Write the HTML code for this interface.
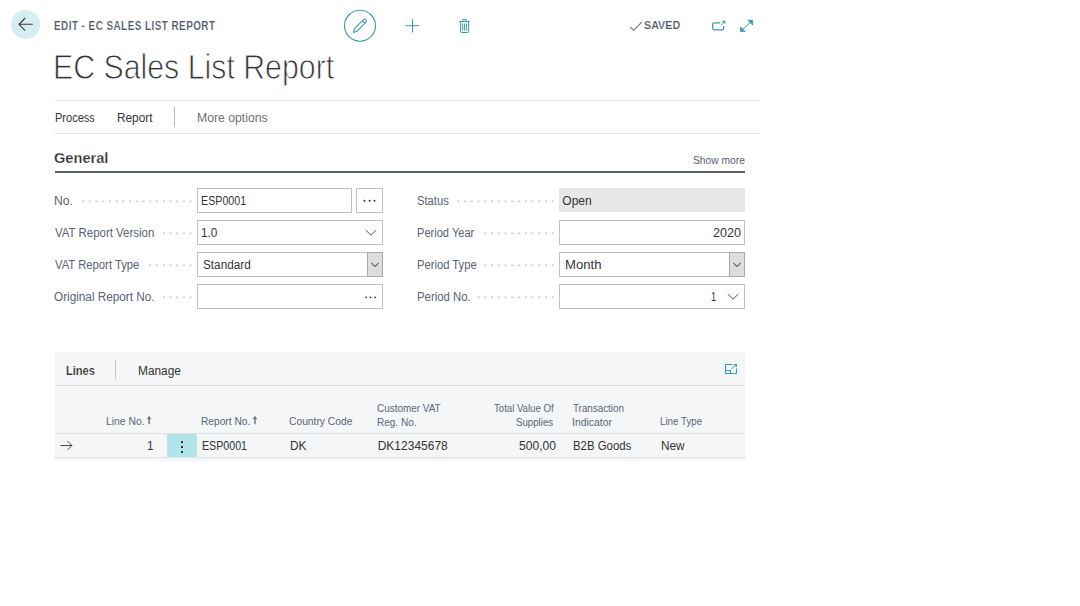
<!DOCTYPE html>
<html><head><meta charset="utf-8">
<style>
*{margin:0;padding:0;box-sizing:border-box}
html,body{width:1080px;height:606px;background:#fff;overflow:hidden;position:relative;font-family:"Liberation Sans",sans-serif;color:#212121}
.a{position:absolute;white-space:nowrap}
.t{position:absolute;white-space:nowrap;line-height:1}
.lbl{color:#566274;font-size:12px;letter-spacing:-0.3px}
.dots{position:absolute;height:3px;background-image:radial-gradient(circle,#c4c7cc 0.75px,transparent 1px);background-size:6.9px 3px;background-repeat:repeat-x;background-position:right center}
.fld{position:absolute;border:1px solid #c2c2c2;background:#fff;height:25px}
.val{font-size:12px;color:#212121}
.hd{color:#505c6d;font-size:11px}
</style></head><body>

<!-- back button -->
<div class="a" style="left:11px;top:10px;width:29px;height:29px;border-radius:50%;background:#d6eef2"></div>
<svg class="a" style="left:0;top:0" width="60" height="50">
<path d="M19.2 24.3H32.8M25.2 18L19 24.3L25.2 30.6" fill="none" stroke="#3a3a3a" stroke-width="1.1"/>
</svg>


<!-- pencil -->
<svg class="a" style="left:330px;top:0" width="160" height="50">
<circle cx="30" cy="25.7" r="15.5" fill="none" stroke="#3a9ca6" stroke-width="1.15"/>
<path d="M23.5 32.5L24.3 28.8L33.5 19.6Q34.8 18.6 35.9 19.7Q37 20.8 36 22.1L26.8 31.3Z M32.3 20.8L34.8 23.3" fill="none" stroke="#3a9ca6" stroke-width="1.1"/>
<path d="M82.5 19.2V32.6M75.4 25.7H89" fill="none" stroke="#3a9ca6" stroke-width="1"/>
<path d="M129 21.5H140M130.6 21.5V31.5Q130.6 32.5 131.6 32.5H137.6Q138.6 32.5 138.6 31.5V21.5M132.5 21.5L133 19.5H136.2L136.7 21.5M132.7 23.5V30.5M134.6 23.5V30.5M136.4 23.5V30.5" fill="none" stroke="#3a9ca6" stroke-width="1"/>
</svg>

<!-- saved -->
<svg class="a" style="left:620px;top:0" width="150" height="50">
<path d="M10.3 26.8L13.8 30.3L21.9 21.9" fill="none" stroke="#667080" stroke-width="1.05"/>
<path d="M100.3 22.9H94Q92.7 22.9 92.7 24.2V28.6Q92.7 29.9 94 29.9H102.3Q103.6 29.9 103.6 28.6V26" fill="none" stroke="#3a9ca6" stroke-width="1.3"/>
<path d="M101 25.2L103.8 22.4" fill="none" stroke="#3a9ca6" stroke-width="1"/>
<path d="M102.5 21H105V23.5Z" fill="#3a9ca6" stroke="#3a9ca6" stroke-width="0.8"/>
<path d="M121 31L132 20.8" fill="none" stroke="#3a9ca6" stroke-width="1"/>
<path d="M128 20.3H132.6V24.9Z" fill="#3a9ca6" stroke="#3a9ca6" stroke-width="0.9" stroke-linejoin="round"/>
<path d="M120.5 27V31.6H125.1Z" fill="#3a9ca6" stroke="#3a9ca6" stroke-width="0.9" stroke-linejoin="round"/>
</svg>

<!-- title -->

<div class="a" style="left:55px;top:100px;width:705px;height:1px;background:#e3e3e3"></div>
<div class="a" style="left:55px;top:133px;width:705px;height:1px;background:#e3e3e3"></div>
<div class="a" style="left:174px;top:107px;width:1px;height:20px;background:#b4bac3"></div>

<!-- General -->
<div class="a" style="left:55px;top:171px;width:690px;height:2px;background:#586273"></div>

<!-- left col -->
<svg class="a" style="left:0;top:0" width="600" height="320">
<rect x="189.77" y="200.50" width="1.8" height="1.8" fill="#c9ccd1"/>
<rect x="183.04" y="200.50" width="1.8" height="1.8" fill="#c9ccd1"/>
<rect x="176.31" y="200.50" width="1.8" height="1.8" fill="#c9ccd1"/>
<rect x="169.58" y="200.50" width="1.8" height="1.8" fill="#c9ccd1"/>
<rect x="162.85" y="200.50" width="1.8" height="1.8" fill="#c9ccd1"/>
<rect x="156.12" y="200.50" width="1.8" height="1.8" fill="#c9ccd1"/>
<rect x="149.39" y="200.50" width="1.8" height="1.8" fill="#c9ccd1"/>
<rect x="142.66" y="200.50" width="1.8" height="1.8" fill="#c9ccd1"/>
<rect x="135.93" y="200.50" width="1.8" height="1.8" fill="#c9ccd1"/>
<rect x="129.20" y="200.50" width="1.8" height="1.8" fill="#c9ccd1"/>
<rect x="122.47" y="200.50" width="1.8" height="1.8" fill="#c9ccd1"/>
<rect x="115.74" y="200.50" width="1.8" height="1.8" fill="#c9ccd1"/>
<rect x="109.01" y="200.50" width="1.8" height="1.8" fill="#c9ccd1"/>
<rect x="102.28" y="200.50" width="1.8" height="1.8" fill="#c9ccd1"/>
<rect x="95.55" y="200.50" width="1.8" height="1.8" fill="#c9ccd1"/>
<rect x="88.82" y="200.50" width="1.8" height="1.8" fill="#c9ccd1"/>
<rect x="82.09" y="200.50" width="1.8" height="1.8" fill="#c9ccd1"/>
<rect x="189.77" y="232.50" width="1.8" height="1.8" fill="#c9ccd1"/>
<rect x="183.04" y="232.50" width="1.8" height="1.8" fill="#c9ccd1"/>
<rect x="176.31" y="232.50" width="1.8" height="1.8" fill="#c9ccd1"/>
<rect x="169.58" y="232.50" width="1.8" height="1.8" fill="#c9ccd1"/>
<rect x="162.85" y="232.50" width="1.8" height="1.8" fill="#c9ccd1"/>
<rect x="189.77" y="264.50" width="1.8" height="1.8" fill="#c9ccd1"/>
<rect x="183.04" y="264.50" width="1.8" height="1.8" fill="#c9ccd1"/>
<rect x="176.31" y="264.50" width="1.8" height="1.8" fill="#c9ccd1"/>
<rect x="169.58" y="264.50" width="1.8" height="1.8" fill="#c9ccd1"/>
<rect x="162.85" y="264.50" width="1.8" height="1.8" fill="#c9ccd1"/>
<rect x="156.12" y="264.50" width="1.8" height="1.8" fill="#c9ccd1"/>
<rect x="149.39" y="264.50" width="1.8" height="1.8" fill="#c9ccd1"/>
<rect x="189.77" y="296.50" width="1.8" height="1.8" fill="#c9ccd1"/>
<rect x="183.04" y="296.50" width="1.8" height="1.8" fill="#c9ccd1"/>
<rect x="176.31" y="296.50" width="1.8" height="1.8" fill="#c9ccd1"/>
<rect x="169.58" y="296.50" width="1.8" height="1.8" fill="#c9ccd1"/>
<rect x="162.85" y="296.50" width="1.8" height="1.8" fill="#c9ccd1"/>
<rect x="551.70" y="200.50" width="1.8" height="1.8" fill="#c9ccd1"/>
<rect x="544.97" y="200.50" width="1.8" height="1.8" fill="#c9ccd1"/>
<rect x="538.24" y="200.50" width="1.8" height="1.8" fill="#c9ccd1"/>
<rect x="531.51" y="200.50" width="1.8" height="1.8" fill="#c9ccd1"/>
<rect x="524.78" y="200.50" width="1.8" height="1.8" fill="#c9ccd1"/>
<rect x="518.05" y="200.50" width="1.8" height="1.8" fill="#c9ccd1"/>
<rect x="511.32" y="200.50" width="1.8" height="1.8" fill="#c9ccd1"/>
<rect x="504.59" y="200.50" width="1.8" height="1.8" fill="#c9ccd1"/>
<rect x="497.86" y="200.50" width="1.8" height="1.8" fill="#c9ccd1"/>
<rect x="491.13" y="200.50" width="1.8" height="1.8" fill="#c9ccd1"/>
<rect x="484.40" y="200.50" width="1.8" height="1.8" fill="#c9ccd1"/>
<rect x="477.67" y="200.50" width="1.8" height="1.8" fill="#c9ccd1"/>
<rect x="470.94" y="200.50" width="1.8" height="1.8" fill="#c9ccd1"/>
<rect x="464.21" y="200.50" width="1.8" height="1.8" fill="#c9ccd1"/>
<rect x="457.48" y="200.50" width="1.8" height="1.8" fill="#c9ccd1"/>
<rect x="551.70" y="232.50" width="1.8" height="1.8" fill="#c9ccd1"/>
<rect x="544.97" y="232.50" width="1.8" height="1.8" fill="#c9ccd1"/>
<rect x="538.24" y="232.50" width="1.8" height="1.8" fill="#c9ccd1"/>
<rect x="531.51" y="232.50" width="1.8" height="1.8" fill="#c9ccd1"/>
<rect x="524.78" y="232.50" width="1.8" height="1.8" fill="#c9ccd1"/>
<rect x="518.05" y="232.50" width="1.8" height="1.8" fill="#c9ccd1"/>
<rect x="511.32" y="232.50" width="1.8" height="1.8" fill="#c9ccd1"/>
<rect x="504.59" y="232.50" width="1.8" height="1.8" fill="#c9ccd1"/>
<rect x="497.86" y="232.50" width="1.8" height="1.8" fill="#c9ccd1"/>
<rect x="491.13" y="232.50" width="1.8" height="1.8" fill="#c9ccd1"/>
<rect x="484.40" y="232.50" width="1.8" height="1.8" fill="#c9ccd1"/>
<rect x="551.70" y="264.50" width="1.8" height="1.8" fill="#c9ccd1"/>
<rect x="544.97" y="264.50" width="1.8" height="1.8" fill="#c9ccd1"/>
<rect x="538.24" y="264.50" width="1.8" height="1.8" fill="#c9ccd1"/>
<rect x="531.51" y="264.50" width="1.8" height="1.8" fill="#c9ccd1"/>
<rect x="524.78" y="264.50" width="1.8" height="1.8" fill="#c9ccd1"/>
<rect x="518.05" y="264.50" width="1.8" height="1.8" fill="#c9ccd1"/>
<rect x="511.32" y="264.50" width="1.8" height="1.8" fill="#c9ccd1"/>
<rect x="504.59" y="264.50" width="1.8" height="1.8" fill="#c9ccd1"/>
<rect x="497.86" y="264.50" width="1.8" height="1.8" fill="#c9ccd1"/>
<rect x="491.13" y="264.50" width="1.8" height="1.8" fill="#c9ccd1"/>
<rect x="484.40" y="264.50" width="1.8" height="1.8" fill="#c9ccd1"/>
<rect x="551.70" y="296.50" width="1.8" height="1.8" fill="#c9ccd1"/>
<rect x="544.97" y="296.50" width="1.8" height="1.8" fill="#c9ccd1"/>
<rect x="538.24" y="296.50" width="1.8" height="1.8" fill="#c9ccd1"/>
<rect x="531.51" y="296.50" width="1.8" height="1.8" fill="#c9ccd1"/>
<rect x="524.78" y="296.50" width="1.8" height="1.8" fill="#c9ccd1"/>
<rect x="518.05" y="296.50" width="1.8" height="1.8" fill="#c9ccd1"/>
<rect x="511.32" y="296.50" width="1.8" height="1.8" fill="#c9ccd1"/>
<rect x="504.59" y="296.50" width="1.8" height="1.8" fill="#c9ccd1"/>
<rect x="497.86" y="296.50" width="1.8" height="1.8" fill="#c9ccd1"/>
<rect x="491.13" y="296.50" width="1.8" height="1.8" fill="#c9ccd1"/>
<rect x="484.40" y="296.50" width="1.8" height="1.8" fill="#c9ccd1"/>
<rect x="477.67" y="296.50" width="1.8" height="1.8" fill="#c9ccd1"/>
</svg>
<div class="fld" style="left:197px;top:188px;width:155px"></div>
<div class="fld" style="left:356px;top:188px;width:27px"></div>
<svg class="a" style="left:356px;top:188px" width="27" height="25"><circle cx="8.4" cy="12.8" r="1" fill="#333"/><circle cx="13.6" cy="12.8" r="1" fill="#333"/><circle cx="18.5" cy="12.8" r="1" fill="#333"/></svg>

<div class="fld" style="left:197px;top:220px;width:186px"></div>
<svg class="a" style="left:364px;top:228px" width="14" height="9"><path d="M1.8 2.2L7 7.2L12.2 2.2" fill="none" stroke="#555" stroke-width="1"/></svg>

<div class="fld" style="left:197px;top:252px;width:186px"></div>
<div class="a" style="left:367px;top:252px;width:16px;height:25px;background:#dedede;border:1px solid #aaa"></div>
<svg class="a" style="left:370px;top:261px" width="10" height="7"><path d="M1.2 1.8L5 5.5L8.8 1.8" fill="none" stroke="#666" stroke-width="1.1"/></svg>

<div class="fld" style="left:197px;top:284px;width:186px"></div>
<svg class="a" style="left:356px;top:284px" width="27" height="25"><circle cx="10" cy="13.3" r="0.9" fill="#333"/><circle cx="14.5" cy="13.3" r="0.9" fill="#333"/><circle cx="19" cy="13.3" r="0.9" fill="#333"/></svg>

<!-- right col -->
<div class="a" style="left:559px;top:188px;width:186px;height:24px;background:#e6e7e9"></div>

<div class="fld" style="left:559px;top:220px;width:186px"></div>

<div class="fld" style="left:559px;top:252px;width:186px"></div>
<div class="a" style="left:729px;top:252px;width:16px;height:25px;background:#dedede;border:1px solid #aaa"></div>
<svg class="a" style="left:732px;top:261px" width="10" height="7"><path d="M1.2 1.8L5 5.5L8.8 1.8" fill="none" stroke="#666" stroke-width="1.1"/></svg>

<div class="fld" style="left:559px;top:284px;width:186px"></div>
<svg class="a" style="left:726px;top:292px" width="14" height="9"><path d="M1.8 2.2L7 7.2L12.2 2.2" fill="none" stroke="#555" stroke-width="1"/></svg>

<!-- lines -->
<div class="a" style="left:55px;top:352px;width:690px;height:109px;background:#f5f6f7"></div>
<div class="a" style="left:115px;top:360px;width:1px;height:19px;background:#c3c9d1"></div>
<svg class="a" style="left:720px;top:360px" width="22" height="18">
<path d="M12.5 4.5H5.5V13.5H16.5V8.5M5.5 10.5H10.5V13.5" fill="none" stroke="#3a9ca6" stroke-width="1.1"/>
<path d="M11.5 9L15.5 5" fill="none" stroke="#3a9ca6" stroke-width="0.9"/>
<path d="M13.5 4H17V7.5Z" fill="#3a9ca6"/>
</svg>
<div class="a" style="left:55px;top:385px;width:690px;height:1px;background:#dcdcdc"></div>


<div class="a" style="left:55px;top:433px;width:690px;height:1px;background:#e0e1e3"></div>
<div class="a" style="left:55px;top:457px;width:690px;height:1px;background:#e0e1e3"></div>
<div class="a" style="left:167px;top:434px;width:30px;height:23px;background:#b1e5ea"></div>
<svg class="a" style="left:55px;top:434px" width="150" height="23">
<path d="M5.5 11.5H16.8M12.6 7.2L16.9 11.5L12.6 15.8" fill="none" stroke="#3a3a3a" stroke-width="0.95"/>
<rect x="126" y="7" width="2" height="2" fill="#333"/>
<rect x="126" y="12" width="2" height="2" fill="#333"/>
<rect x="126" y="17" width="2" height="2" fill="#333"/>
</svg>

<svg class="a" style="left:140px;top:410px" width="130" height="20">
<path d="M6.8 9.2L9.1 5.8L11.4 9.2Z" fill="#6e7278"/><rect x="8.4" y="8.8" width="1.4" height="5.4" fill="#6e7278"/>
<path d="M112.7 9.2L115 5.8L117.3 9.2Z" fill="#6e7278"/><rect x="114.3" y="8.8" width="1.4" height="5.4" fill="#6e7278"/>
</svg>
<div class="t" style="left:54.24px;top:18.70px;font-size:13px;font-weight:bold;color:#4a5566;transform:scaleX(0.7619);transform-origin:0 0;letter-spacing:0.6px;-webkit-text-stroke:0.2px #fff;">EDIT - EC SALES LIST REPORT</div>
<div class="t" style="left:643.87px;top:19.57px;font-size:11.5px;font-weight:bold;color:#4a5566;transform:scaleX(0.9324);transform-origin:0 0;-webkit-text-stroke:0.2px #fff;">SAVED</div>
<div class="t" style="left:52.59px;top:49.55px;font-size:35.5px;font-weight:normal;color:#333;transform:scaleX(0.8532);transform-origin:0 0;-webkit-text-stroke:0.9px #fff;">EC Sales List Report</div>
<div class="t" style="left:54.68px;top:112.14px;font-size:12px;font-weight:normal;color:#333;transform:scaleX(0.9190);transform-origin:0 0;">Process</div>
<div class="t" style="left:116.51px;top:112.14px;font-size:12px;font-weight:normal;color:#333;transform:scaleX(0.9857);transform-origin:0 0;">Report</div>
<div class="t" style="left:196.68px;top:112.14px;font-size:12px;font-weight:normal;color:#6f6f6f;transform:scaleX(1.0191);transform-origin:0 0;">More options</div>
<div class="t" style="left:53.96px;top:150.95px;font-size:14px;font-weight:bold;color:#2b2b2b;transform:scaleX(1.0440);transform-origin:0 0;-webkit-text-stroke:0.25px #fff;">General</div>
<div class="t" style="left:693.07px;top:155.19px;font-size:11px;font-weight:normal;color:#566274;transform:scaleX(0.9333);transform-origin:0 0;">Show more</div>
<div class="t" style="left:53.99px;top:194.84px;font-size:12px;font-weight:normal;color:#566274;transform:scaleX(1.0118);transform-origin:0 0;">No.</div>
<div class="t" style="left:55.00px;top:226.84px;font-size:12px;font-weight:normal;color:#566274;transform:scaleX(0.9544);transform-origin:0 0;">VAT Report Version</div>
<div class="t" style="left:55.30px;top:258.84px;font-size:12px;font-weight:normal;color:#566274;transform:scaleX(0.9393);transform-origin:0 0;">VAT Report Type</div>
<div class="t" style="left:54.32px;top:290.84px;font-size:12px;font-weight:normal;color:#566274;transform:scaleX(0.9792);transform-origin:0 0;">Original Report No.</div>
<div class="t" style="left:416.66px;top:194.84px;font-size:12px;font-weight:normal;color:#566274;transform:scaleX(0.9364);transform-origin:0 0;">Status</div>
<div class="t" style="left:416.68px;top:226.84px;font-size:12px;font-weight:normal;color:#566274;transform:scaleX(0.9230);transform-origin:0 0;">Period Year</div>
<div class="t" style="left:416.66px;top:258.84px;font-size:12px;font-weight:normal;color:#566274;transform:scaleX(0.9355);transform-origin:0 0;">Period Type</div>
<div class="t" style="left:416.65px;top:290.84px;font-size:12px;font-weight:normal;color:#566274;transform:scaleX(0.9455);transform-origin:0 0;">Period No.</div>
<div class="t" style="left:201.01px;top:194.84px;font-size:12px;font-weight:normal;color:#333;transform:scaleX(0.8918);transform-origin:0 0;">ESP0001</div>
<div class="t" style="left:201.22px;top:226.84px;font-size:12px;font-weight:normal;color:#333;transform:scaleX(0.9800);transform-origin:0 0;">1.0</div>
<div class="t" style="left:202.92px;top:258.84px;font-size:12px;font-weight:normal;color:#333;transform:scaleX(0.9809);transform-origin:0 0;">Standard</div>
<div class="t" style="left:562.30px;top:194.84px;font-size:12px;font-weight:normal;color:#333;">Open</div>
<div class="t" style="left:712.65px;top:226.84px;font-size:12px;font-weight:normal;color:#333;transform:scaleX(1.0520);transform-origin:0 0;">2020</div>
<div class="t" style="left:565.01px;top:258.84px;font-size:12px;font-weight:normal;color:#333;transform:scaleX(1.0938);transform-origin:0 0;">Month</div>
<div class="t" style="left:711.04px;top:290.84px;font-size:12px;font-weight:normal;color:#333;transform:scaleX(0.7600);transform-origin:0 0;">1</div>
<div class="t" style="left:66.38px;top:364.64px;font-size:12px;font-weight:bold;color:#2b2b2b;transform:scaleX(0.9233);transform-origin:0 0;-webkit-text-stroke:0.2px #f5f6f7;">Lines</div>
<div class="t" style="left:138.21px;top:364.64px;font-size:12px;font-weight:normal;color:#333;transform:scaleX(0.9881);transform-origin:0 0;">Manage</div>
<div class="t" style="left:105.66px;top:415.59px;font-size:11px;font-weight:normal;color:#5a6474;transform:scaleX(0.9410);transform-origin:0 0;">Line No.</div>
<div class="t" style="left:200.57px;top:415.59px;font-size:11px;font-weight:normal;color:#5a6474;transform:scaleX(0.9255);transform-origin:0 0;">Report No.</div>
<div class="t" style="left:289.27px;top:415.79px;font-size:11px;font-weight:normal;color:#5a6474;transform:scaleX(0.9348);transform-origin:0 0;">Country Code</div>
<div class="t" style="left:377.20px;top:403.39px;font-size:11px;font-weight:normal;color:#5a6474;transform:scaleX(0.9029);transform-origin:0 0;">Customer VAT</div>
<div class="t" style="left:377.19px;top:416.69px;font-size:11px;font-weight:normal;color:#5a6474;transform:scaleX(0.9098);transform-origin:0 0;">Reg. No.</div>
<div class="t" style="left:494.00px;top:403.39px;font-size:11px;font-weight:normal;color:#5a6474;transform:scaleX(0.8721);transform-origin:0 0;">Total Value Of</div>
<div class="t" style="left:516.32px;top:416.69px;font-size:11px;font-weight:normal;color:#5a6474;transform:scaleX(0.8805);transform-origin:0 0;">Supplies</div>
<div class="t" style="left:572.90px;top:403.39px;font-size:11px;font-weight:normal;color:#5a6474;transform:scaleX(0.8911);transform-origin:0 0;">Transaction</div>
<div class="t" style="left:572.25px;top:416.69px;font-size:11px;font-weight:normal;color:#5a6474;transform:scaleX(0.9463);transform-origin:0 0;">Indicator</div>
<div class="t" style="left:660.21px;top:415.59px;font-size:11px;font-weight:normal;color:#5a6474;transform:scaleX(0.8891);transform-origin:0 0;">Line Type</div>
<div class="t" style="left:147.32px;top:440.44px;font-size:12px;font-weight:normal;color:#333;transform:scaleX(0.9800);transform-origin:0 0;">1</div>
<div class="t" style="left:201.91px;top:440.44px;font-size:12px;font-weight:normal;color:#333;transform:scaleX(0.8878);transform-origin:0 0;">ESP0001</div>
<div class="t" style="left:289.81px;top:440.44px;font-size:12px;font-weight:normal;color:#333;transform:scaleX(0.9867);transform-origin:0 0;">DK</div>
<div class="t" style="left:377.70px;top:440.44px;font-size:12px;font-weight:normal;color:#333;">DK12345678</div>
<div class="t" style="left:518.79px;top:440.44px;font-size:12px;font-weight:normal;color:#333;transform:scaleX(1.0057);transform-origin:0 0;">500,00</div>
<div class="t" style="left:573.05px;top:440.44px;font-size:12px;font-weight:normal;color:#333;transform:scaleX(0.9500);transform-origin:0 0;">B2B Goods</div>
<div class="t" style="left:660.82px;top:440.44px;font-size:12px;font-weight:normal;color:#333;transform:scaleX(0.9826);transform-origin:0 0;">New</div>
</body></html>
